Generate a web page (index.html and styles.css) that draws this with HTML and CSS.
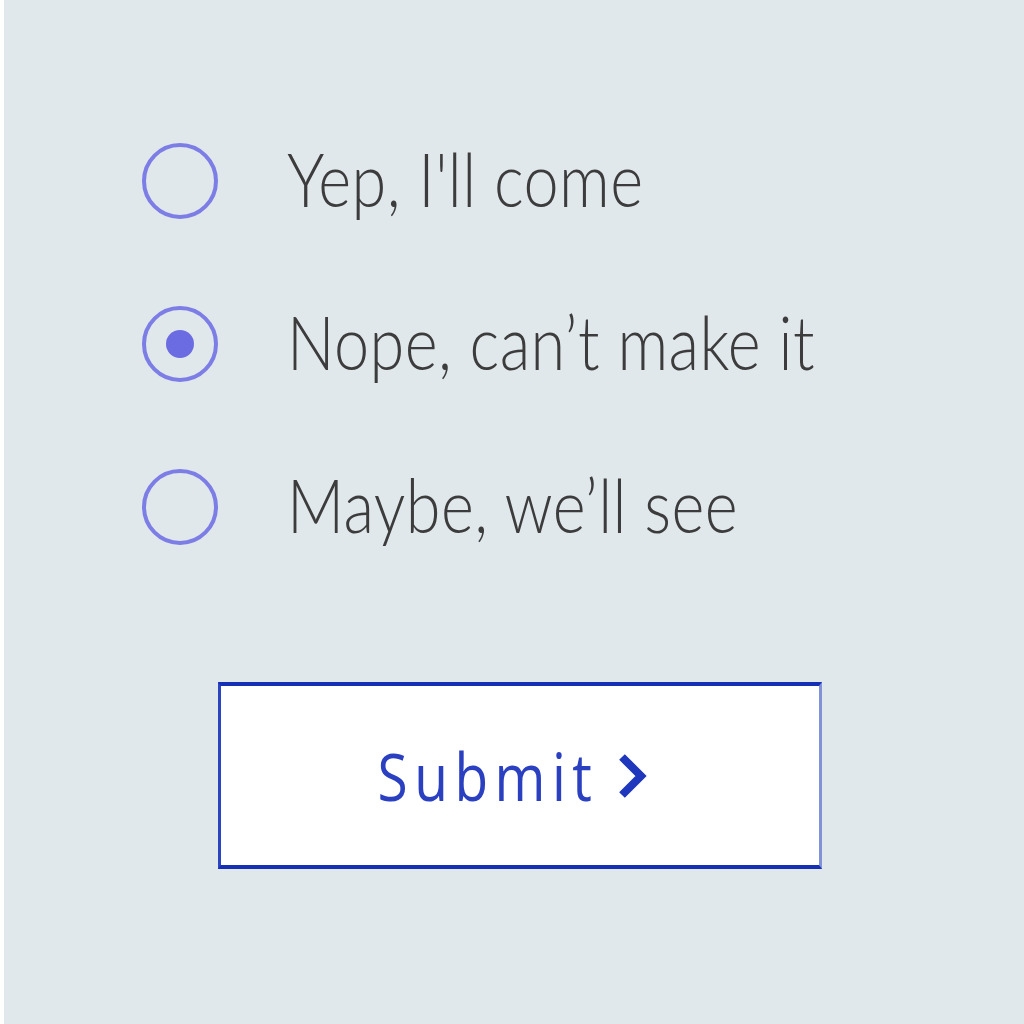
FILE: index.html
```html
<!DOCTYPE html>
<html lang="en">
<head>
<meta charset="utf-8">
<title>RSVP</title>
<link rel="stylesheet" href="styles.css">
</head>
<body>
<main class="page">
  <form class="rsvp">
    <ul class="options">
      <li class="option">
        <span class="radio"></span>
        <span class="label">Yep, I'll come</span>
      </li>
      <li class="option">
        <span class="radio checked"><span class="dot"></span></span>
        <span class="label">Nope, can’t make it</span>
      </li>
      <li class="option">
        <span class="radio"></span>
        <span class="label">Maybe, we’ll see</span>
      </li>
    </ul>
    <button type="button" class="submit">
      <span class="submit-text">Submit</span>
      <svg class="chevron" width="30" height="46" viewBox="0 0 30 46" aria-hidden="true">
        <polyline points="4,4 23,23 4,42" fill="none" stroke="#1e37bd" stroke-width="8" stroke-linejoin="miter"/>
      </svg>
    </button>
  </form>
</main>
</body>
</html>
```

FILE: styles.css
```css
html, body {
  margin: 0;
  padding: 0;
  height: 100%;
}

body {
  background: #ffffff;
}

.page {
  box-sizing: border-box;
  height: 1024px;
  margin-left: 4px;
  background: #e0e8eb;
  padding: 143px 0 0 138px;
}

.options {
  list-style: none;
  margin: 0;
  padding: 0;
  display: flex;
  flex-direction: column;
  gap: 87px;
}

.option {
  display: flex;
  align-items: center;
  gap: 69px;
  height: 76px;
}

.radio {
  box-sizing: border-box;
  flex: none;
  width: 76px;
  height: 76px;
  border: 4px solid #7d7de6;
  border-radius: 50%;
  display: flex;
  align-items: center;
  justify-content: center;
}

.dot {
  width: 28px;
  height: 28px;
  border-radius: 50%;
  background: #6c6ce2;
}

.label {
  display: inline-block;
  font-family: Lato, "Liberation Sans", sans-serif;
  font-weight: 300;
  font-size: 63px;
  letter-spacing: 0.4px;
  line-height: 1;
  padding-bottom: 6px;
  color: #3c3c3c;
  transform: scaleY(1.2);
  white-space: nowrap;
}

.submit {
  box-sizing: border-box;
  margin: 137px 0 0 76px;
  width: 604px;
  height: 187px;
  background: #ffffff;
  border-style: solid;
  border-width: 4px 3px 4px 3px;
  border-color: #1530b4 #8192da #1530b4 #2a44c4;
  border-radius: 0;
  display: flex;
  align-items: center;
  justify-content: center;
  gap: 20px;
  padding: 0 14px 0 0;
  cursor: pointer;
}

.submit-text {
  display: inline-block;
  font-family: "Open Sans", "DejaVu Sans", sans-serif;
  font-weight: 500;
  font-size: 55px;
  letter-spacing: 6.5px;
  color: #2a40c0;
  line-height: 1;
  transform: scaleY(1.2);
}

.chevron {
  flex: none;
}
```
